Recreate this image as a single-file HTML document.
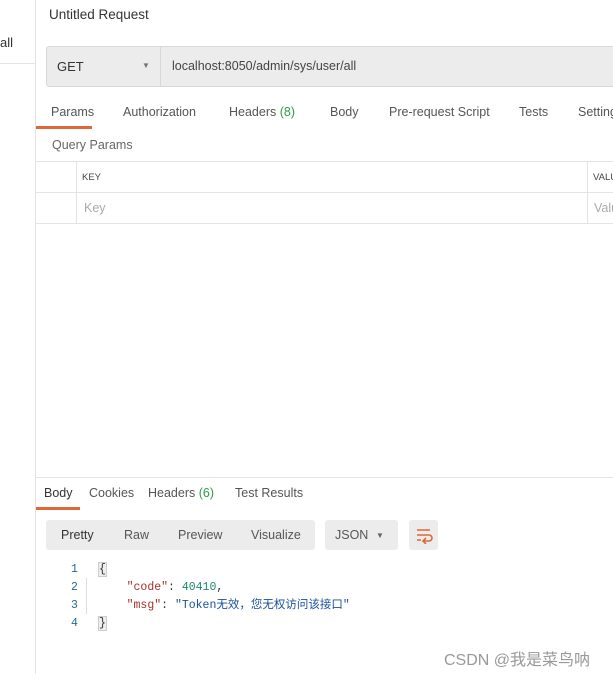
<!DOCTYPE html>
<html><head><style>
body{margin:0;width:613px;height:674px;background:#fff;font-family:"Liberation Sans","Noto Sans CJK SC",sans-serif;position:relative;overflow:hidden;color:#505050}
.a{position:absolute;white-space:nowrap}
.t{font-size:12.5px;color:#555}
.mono{font-family:"Liberation Mono","Noto Sans CJK SC",monospace;font-size:11.5px}
</style></head><body>
<div class="a" style="left:35px;top:0;width:1px;height:674px;background:#e4e4e4"></div>
<div class="a" style="left:0;top:63px;width:35px;height:1px;background:#e4e4e4"></div>
<div class="a" style="left:0;top:35px;font-size:13px;color:#333">all</div>
<div class="a" style="left:49px;top:7px;font-size:13.5px;color:#333">Untitled Request</div>
<div class="a" style="left:46px;top:46px;width:580px;height:39px;background:#ececec;border:1px solid #d8d8d8;border-radius:3px"></div>
<div class="a" style="left:160px;top:47px;width:1px;height:39px;background:#d8d8d8"></div>
<div class="a" style="left:57px;top:59px;font-size:13px;color:#333">GET</div>
<div class="a" style="left:142px;top:61px;font-size:8px;color:#777">▼</div>
<div class="a" style="left:172px;top:59px;font-size:12.5px;color:#444">localhost:8050/admin/sys/user/all</div>
<div class="a t" style="left:51px;top:105px">Params</div>
<div class="a t" style="left:123px;top:105px">Authorization</div>
<div class="a t" style="left:229px;top:105px">Headers <span style="color:#2e9b4a">(8)</span></div>
<div class="a t" style="left:330px;top:105px">Body</div>
<div class="a t" style="left:389px;top:105px">Pre-request Script</div>
<div class="a t" style="left:519px;top:105px">Tests</div>
<div class="a t" style="left:578px;top:105px">Settings</div>
<div class="a" style="left:36px;top:126px;width:56px;height:3px;background:#e0673a"></div>
<div class="a" style="left:52px;top:138px;font-size:12.5px;color:#666">Query Params</div>
<div class="a" style="left:36px;top:161px;width:577px;height:1px;background:#e4e4e4"></div>
<div class="a" style="left:36px;top:192px;width:577px;height:1px;background:#e4e4e4"></div>
<div class="a" style="left:36px;top:223px;width:577px;height:1px;background:#e4e4e4"></div>
<div class="a" style="left:76px;top:162px;width:1px;height:61px;background:#e4e4e4"></div>
<div class="a" style="left:587px;top:162px;width:1px;height:61px;background:#e4e4e4"></div>
<div class="a" style="left:82px;top:172px;font-size:9.5px;color:#444">KEY</div>
<div class="a" style="left:593px;top:172px;font-size:9.5px;color:#444">VALUE</div>
<div class="a" style="left:84px;top:201px;font-size:12.5px;color:#aaa">Key</div>
<div class="a" style="left:594px;top:201px;font-size:12.5px;color:#aaa">Value</div>
<div class="a" style="left:36px;top:477px;width:577px;height:1px;background:#e4e4e4"></div>
<div class="a t" style="left:44px;top:486px;color:#333">Body</div>
<div class="a t" style="left:89px;top:486px">Cookies</div>
<div class="a t" style="left:148px;top:486px">Headers <span style="color:#2e9b4a">(6)</span></div>
<div class="a t" style="left:235px;top:486px">Test Results</div>
<div class="a" style="left:36px;top:507px;width:44px;height:3px;background:#e0673a"></div>
<div class="a" style="left:46px;top:520px;width:269px;height:30px;background:#ececec;border-radius:3px"></div>
<div class="a t" style="left:61px;top:528px;color:#333">Pretty</div>
<div class="a t" style="left:124px;top:528px">Raw</div>
<div class="a t" style="left:178px;top:528px">Preview</div>
<div class="a t" style="left:251px;top:528px">Visualize</div>
<div class="a" style="left:325px;top:520px;width:73px;height:30px;background:#ececec;border-radius:3px"></div>
<div class="a t" style="left:335px;top:528px">JSON</div>
<div class="a" style="left:376px;top:531px;font-size:8px;color:#666">▼</div>
<div class="a" style="left:409px;top:520px;width:29px;height:30px;background:#ececec;border-radius:3px"></div>
<svg class="a" style="left:414px;top:526px" width="20" height="18" viewBox="0 0 20 18"><path d="M3 4h13M3 9h12a3 3 0 0 1 0 6h-5M12 12l-3 3 3 3M3 14h4" stroke="#e0673a" stroke-width="1.6" fill="none"/></svg>
<div class="a mono" style="left:71px;top:561px;color:#2a6a8a;line-height:18px">1<br>2<br>3<br>4</div>
<div class="a mono" style="left:99px;top:561px;line-height:18px;color:#333"><span style="background:#eee;outline:1px solid #ccc">{</span><br>&nbsp;&nbsp;&nbsp;&nbsp;<span style="color:#a3312b">"code"</span>: <span style="color:#1a8a6a">40410</span>,<br>&nbsp;&nbsp;&nbsp;&nbsp;<span style="color:#a3312b">"msg"</span>: <span style="color:#1a4f9a">"Token无效，您无权访问该接口"</span><br><span style="background:#eee;outline:1px solid #ccc">}</span></div>
<div class="a" style="left:86px;top:578px;width:1px;height:36px;background:#ddd"></div>
<div class="a" style="left:444px;top:646px;font-size:16px;color:#999">CSDN @我是菜鸟呐</div>
</body></html>
